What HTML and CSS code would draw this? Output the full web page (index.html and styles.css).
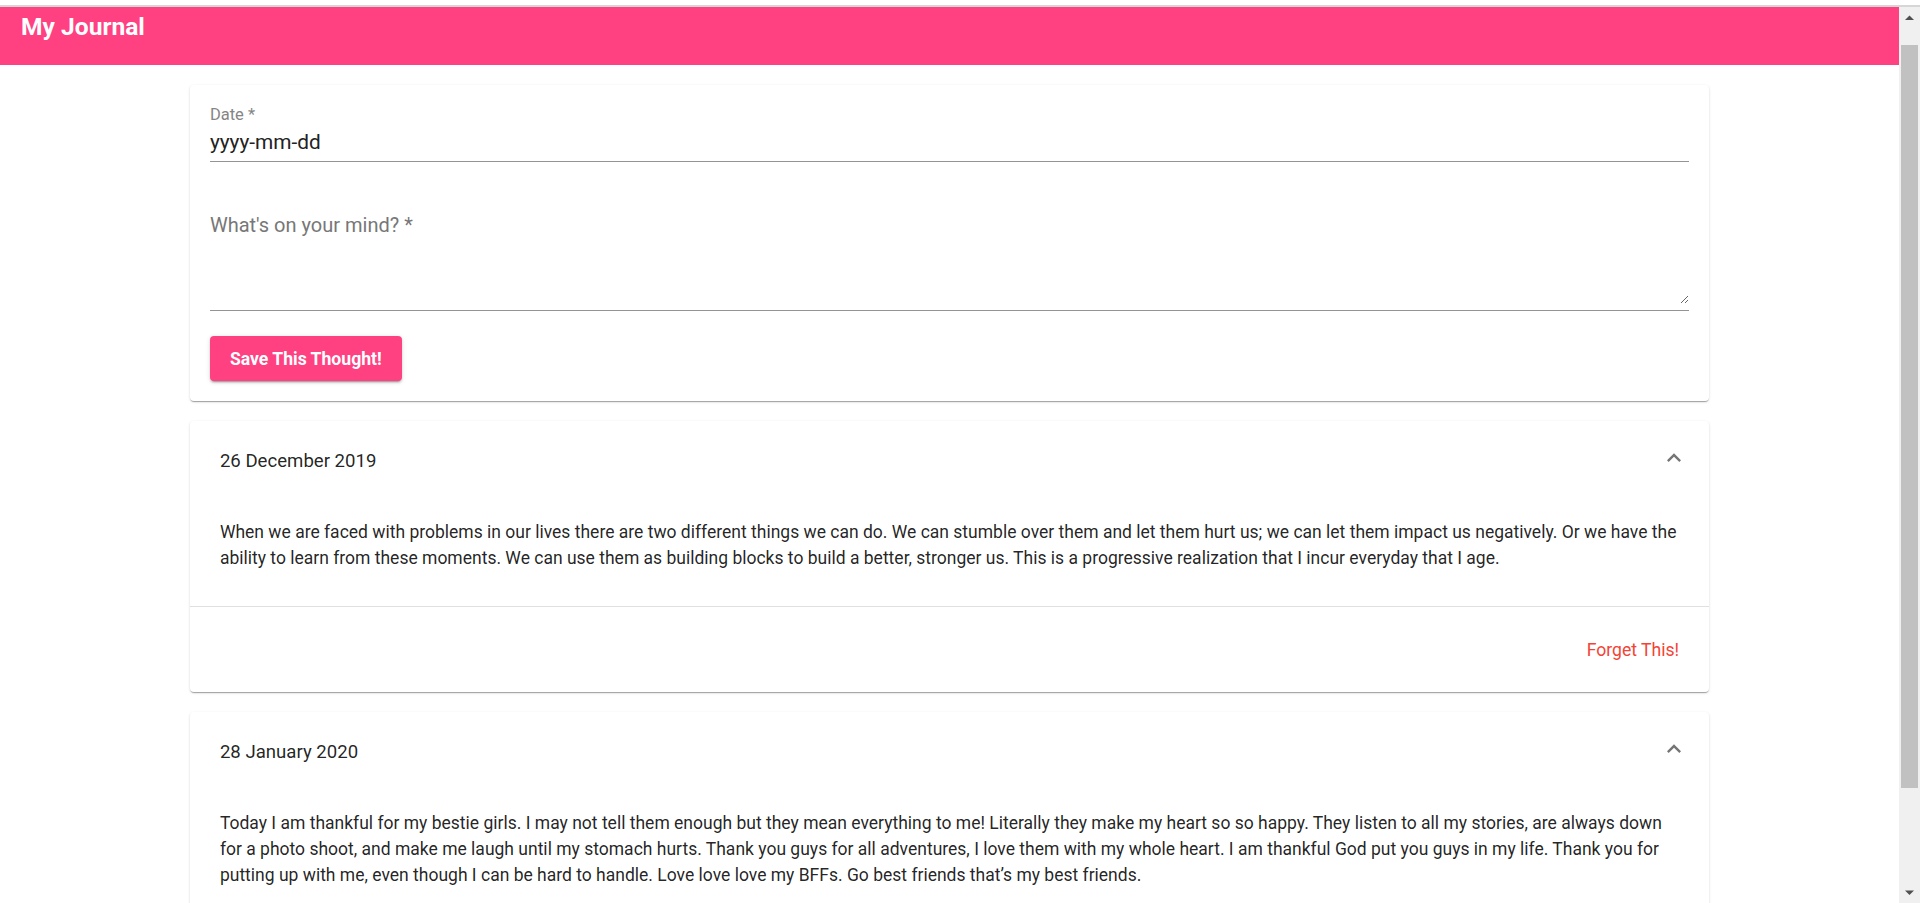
FILE: index.html
```html
<!DOCTYPE html>
<html lang="en">
<head>
<meta charset="utf-8">
<title>My Journal</title>
<link rel="stylesheet" href="styles.css">
</head>
<body>
<div class="top-strip"></div>
<div class="viewport">
  <div class="page">
    <header class="appbar">
      <h1 class="appbar-title">My Journal</h1>
    </header>
    <main class="container">
      <form class="card form-card">
        <label class="field-label">Date *</label>
        <div class="date-field">yyyy-mm-dd</div>
        <div class="textarea-wrap">
          <textarea class="thought" placeholder="What's on your mind? *"></textarea>
        </div>
        <button class="save-btn" type="button">Save This Thought!</button>
      </form>

      <section class="card entry">
        <div class="entry-head">
          <span class="entry-date">26 December 2019</span>
          <svg class="chevron" viewBox="0 0 24 24" width="28" height="28"><path d="M12 8l-6 6 1.41 1.41L12 10.83l4.59 4.58L18 14z"/></svg>
        </div>
        <p class="entry-text">When we are faced with problems in our lives there are two different things we can do. We can stumble over them and let them hurt us; we can let them impact us negatively. Or we have the ability to learn from these moments. We can use them as building blocks to build a better, stronger us. This is a progressive realization that I incur everyday that I age.</p>
        <div class="entry-actions">
          <button class="forget-btn" type="button">Forget This!</button>
        </div>
      </section>

      <section class="card entry">
        <div class="entry-head">
          <span class="entry-date">28 January 2020</span>
          <svg class="chevron" viewBox="0 0 24 24" width="28" height="28"><path d="M12 8l-6 6 1.41 1.41L12 10.83l4.59 4.58L18 14z"/></svg>
        </div>
        <p class="entry-text">Today I am thankful for my bestie girls. I may not tell them enough but they mean everything to me! Literally they make my heart so so happy. They listen to all my stories, are always down for a photo shoot, and make me laugh until my stomach hurts. Thank you guys for all adventures, I love them with my whole heart. I am thankful God put you guys in my life. Thank you for putting up with me, even though I can be hard to handle. Love love love my BFFs. Go best friends that’s my best friends.</p>
        <div class="entry-actions">
          <button class="forget-btn" type="button">Forget This!</button>
        </div>
      </section>
    </main>
  </div>
  <div class="scrollbar">
    <div class="sb-btn"><svg viewBox="0 0 21 21" width="21" height="21"><polygon points="6,13 15,13 10.5,8.5"/></svg></div>
    <div class="sb-track"><div class="sb-thumb"></div></div>
    <div class="sb-btn"><svg viewBox="0 0 21 21" width="21" height="21"><polygon points="6,8.5 15,8.5 10.5,13"/></svg></div>
  </div>
</div>
</body>
</html>
```

FILE: styles.css
```css
* { box-sizing: border-box; }

html, body {
  margin: 0;
  padding: 0;
  height: 100%;
  overflow: hidden;
  background: #ffffff;
  font-family: Roboto, "Liberation Sans", Arial, sans-serif;
  color: rgba(0, 0, 0, 0.87);
}

.top-strip {
  height: 7px;
  background: #ffffff;
  border-bottom: 2px solid #d6d6d6;
}

.viewport {
  display: flex;
  height: 896px;
  overflow: hidden;
}

.page {
  flex: 1;
  min-width: 0;
  overflow: hidden;
}

/* App bar */
.appbar {
  height: 58px;
  background: #ff4081;
  padding: 5px 21px 0;
}

.appbar-title {
  margin: 0;
  font-size: 24.6px;
  line-height: 30px;
  font-weight: 700;
  color: #ffffff;
}

/* Container */
.container {
  width: 80%;
  margin: 0 auto;
  padding-top: 20px;
}

.card {
  background: #ffffff;
  border-radius: 4px;
  box-shadow: 0 2px 1px -1px rgba(0,0,0,0.2), 0 1px 1px 0 rgba(0,0,0,0.14), 0 1px 3px 0 rgba(0,0,0,0.12);
  margin-bottom: 20px;
}

/* Form card */
.form-card {
  display: flex;
  flex-direction: column;
  align-items: stretch;
  padding: 22px 20px 20px;
}

.field-label {
  font-size: 16.5px;
  line-height: 16px;
  color: #858585;
}

.date-field {
  padding: 7px 0 7px;
  font-size: 20.8px;
  line-height: 24px;
  color: #222222;
  border-bottom: 1px solid #949494;
}

.textarea-wrap {
  margin-top: 45px;
  padding: 6px 0;
  border-bottom: 1px solid #949494;
}

.thought {
  display: block;
  width: 100%;
  height: 91px;
  margin: 0;
  padding: 0;
  border: 0;
  outline: none;
  resize: vertical;
  background: transparent;
  font-family: Roboto, "Liberation Sans", Arial, sans-serif;
  font-size: 20px;
  line-height: 24px;
  color: #222222;
}

.thought::placeholder {
  color: #777777;
  opacity: 1;
}

.save-btn {
  align-self: flex-start;
  margin-top: 25px;
  height: 45px;
  padding: 0 20px;
  border: 0;
  border-radius: 4px;
  background: #ff4081;
  color: #ffffff;
  font-family: Roboto, "Liberation Sans", Arial, sans-serif;
  font-size: 17.6px;
  font-weight: 700;
  box-shadow: 0 3px 1px -2px rgba(0,0,0,0.2), 0 2px 2px 0 rgba(0,0,0,0.14), 0 1px 5px 0 rgba(0,0,0,0.12);
  cursor: pointer;
}

/* Entry cards */
.entry-head {
  display: flex;
  align-items: center;
  height: 80px;
  padding: 0 21px 0 30px;
}

.entry-date {
  font-size: 18.6px;
  line-height: 24px;
  color: rgba(0, 0, 0, 0.87);
}

.chevron {
  margin-left: auto;
  align-self: flex-start;
  margin-top: 23px;
  fill: #757575;
}

.entry-text {
  margin: 0;
  padding: 17.5px 30px 35.5px;
  font-size: 17.5px;
  line-height: 26px;
  color: rgba(0, 0, 0, 0.87);
}

.entry-actions {
  display: flex;
  justify-content: flex-end;
  align-items: center;
  height: 86px;
  padding-right: 30px;
  border-top: 1px solid #e0e0e0;
}

.forget-btn {
  padding: 0;
  border: 0;
  background: none;
  color: #f44336;
  font-family: Roboto, "Liberation Sans", Arial, sans-serif;
  font-size: 17.6px;
  line-height: 24px;
  cursor: pointer;
}

/* Fake scrollbar */
.scrollbar {
  width: 21px;
  flex: none;
  display: flex;
  flex-direction: column;
  background: #f0f0f0;
}

.sb-btn {
  height: 21px;
  flex: none;
}

.sb-btn svg {
  display: block;
  fill: #505050;
}

.sb-track {
  flex: 1;
  padding: 17px 2px 0;
}

.sb-thumb {
  height: 743px;
  background: #c1c1c1;
}
```
